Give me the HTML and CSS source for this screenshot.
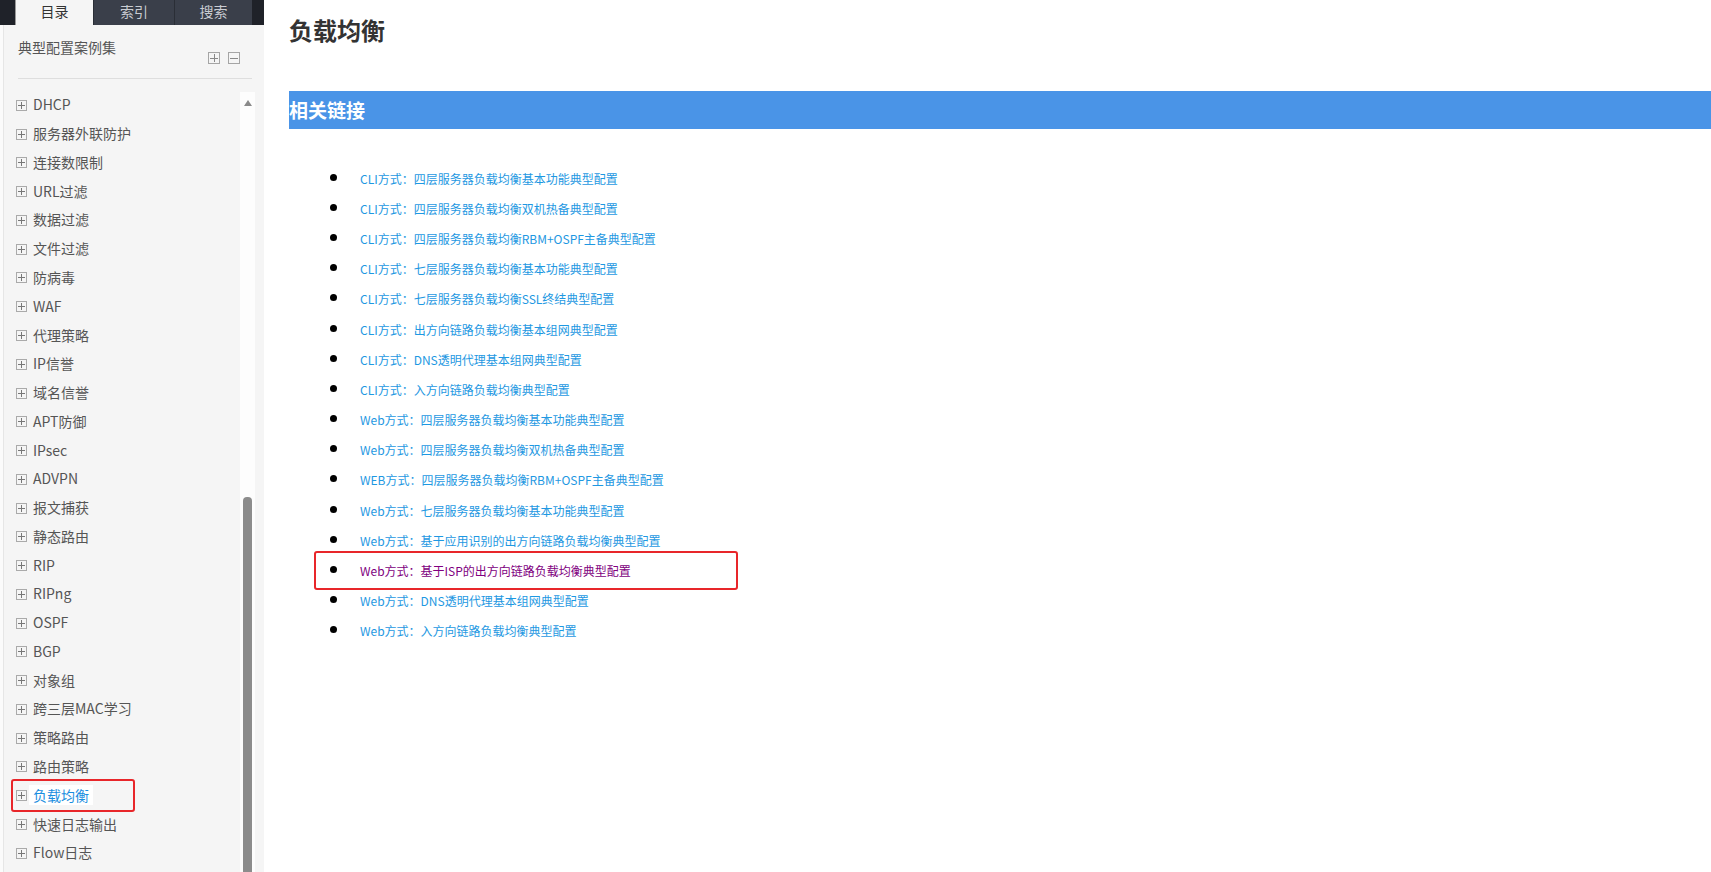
FILE: index.html
```html
<!DOCTYPE html>
<html lang="zh-CN">
<head>
    <meta charset="UTF-8">
    <meta name="viewport" content="width=device-width, initial-scale=1.0">
    <title>负载均衡</title>
    <link rel="stylesheet" href="styles.css">
</head>
<body>
    <div class="sidebar">
        <div class="tabs">
            <div class="tab active">目录</div>
            <div class="tab">索引</div>
            <div class="tab">搜索</div>
        </div>

        <div class="toc-head">
            <span class="toc-title">典型配置案例集</span>
            <span class="toc-tools"><i class="tool plus"></i><i class="tool minus"></i></span>
        </div>

        <div class="tree-wrap">
            <ul class="tree">
                <li><i class="node"></i><span class="label">DHCP</span></li>
                <li><i class="node"></i><span class="label">服务器外联防护</span></li>
                <li><i class="node"></i><span class="label">连接数限制</span></li>
                <li><i class="node"></i><span class="label">URL过滤</span></li>
                <li><i class="node"></i><span class="label">数据过滤</span></li>
                <li><i class="node"></i><span class="label">文件过滤</span></li>
                <li><i class="node"></i><span class="label">防病毒</span></li>
                <li><i class="node"></i><span class="label">WAF</span></li>
                <li><i class="node"></i><span class="label">代理策略</span></li>
                <li><i class="node"></i><span class="label">IP信誉</span></li>
                <li><i class="node"></i><span class="label">域名信誉</span></li>
                <li><i class="node"></i><span class="label">APT防御</span></li>
                <li><i class="node"></i><span class="label">IPsec</span></li>
                <li><i class="node"></i><span class="label">ADVPN</span></li>
                <li><i class="node"></i><span class="label">报文捕获</span></li>
                <li><i class="node"></i><span class="label">静态路由</span></li>
                <li><i class="node"></i><span class="label">RIP</span></li>
                <li><i class="node"></i><span class="label">RIPng</span></li>
                <li><i class="node"></i><span class="label">OSPF</span></li>
                <li><i class="node"></i><span class="label">BGP</span></li>
                <li><i class="node"></i><span class="label">对象组</span></li>
                <li><i class="node"></i><span class="label">跨三层MAC学习</span></li>
                <li><i class="node"></i><span class="label">策略路由</span></li>
                <li><i class="node"></i><span class="label">路由策略</span></li>
                <li class="selected"><i class="node"></i><span class="label">负载均衡</span><span class="mark side-mark"></span></li>
                <li><i class="node"></i><span class="label">快速日志输出</span></li>
                <li><i class="node"></i><span class="label">Flow日志</span></li>
            </ul>
            <div class="scrollbar">
                <span class="arrow-up"></span>
                <span class="track-space"></span>
                <span class="thumb"></span>
            </div>
        </div>
    </div>

    <div class="content">
        <h1 class="page-title">负载均衡</h1>
        <h2 class="section-bar">相关链接</h2>

        <ul class="links">
            <li><a href="#">CLI方式：四层服务器负载均衡基本功能典型配置</a></li>
            <li><a href="#">CLI方式：四层服务器负载均衡双机热备典型配置</a></li>
            <li><a href="#">CLI方式：四层服务器负载均衡RBM+OSPF主备典型配置</a></li>
            <li><a href="#">CLI方式：七层服务器负载均衡基本功能典型配置</a></li>
            <li><a href="#">CLI方式：七层服务器负载均衡SSL终结典型配置</a></li>
            <li><a href="#">CLI方式：出方向链路负载均衡基本组网典型配置</a></li>
            <li><a href="#">CLI方式：DNS透明代理基本组网典型配置</a></li>
            <li><a href="#">CLI方式：入方向链路负载均衡典型配置</a></li>
            <li><a href="#">Web方式：四层服务器负载均衡基本功能典型配置</a></li>
            <li><a href="#">Web方式：四层服务器负载均衡双机热备典型配置</a></li>
            <li><a href="#">WEB方式：四层服务器负载均衡RBM+OSPF主备典型配置</a></li>
            <li><a href="#">Web方式：七层服务器负载均衡基本功能典型配置</a></li>
            <li><a href="#">Web方式：基于应用识别的出方向链路负载均衡典型配置</a></li>
            <li class="marked"><a href="#" class="visited">Web方式：基于ISP的出方向链路负载均衡典型配置</a><span class="mark link-mark"></span></li>
            <li><a href="#">Web方式：DNS透明代理基本组网典型配置</a></li>
            <li><a href="#">Web方式：入方向链路负载均衡典型配置</a></li>
        </ul>
    </div>
</body>
</html>
```

FILE: styles.css
```css
html, body { height: 100%; }
body {
    margin: 0;
    display: flex;
    overflow: hidden;
    background: #fff;
    font-family: "Noto Sans CJK SC", "Microsoft YaHei", sans-serif;
}
ul { list-style: none; margin: 0; padding: 0; }

/* ---- left side: toc ---- */
.sidebar {
    width: 264px;
    flex: none;
    display: flex;
    flex-direction: column;
    background: #f5f5f5;
    box-shadow: inset 3px 0 #fbfbfb, inset 4px 0 #e6e6e6;
}
.tabs {
    height: 25px;
    display: flex;
    padding-left: 15px;
    background: #1f2229;
}
.tab {
    width: 80px;
    height: 25px;
    line-height: 23px;
    text-align: center;
    font-size: 14px;
    color: #c9ccd2;
    background: #3a3f4a;
    border-left: 1px solid #2a2e36;
}
.tab.active { width: 77px; color: #333; background: #f5f5f5; border-left-color: #999; }
.tab:last-child { width: 77px; }

.toc-head {
    display: flex;
    justify-content: space-between;
    margin: 0 12px 0 18px;
    padding: 12px 0 14px;
    border-bottom: 1px solid #dedede;
}
.toc-title { font-size: 14px; line-height: 20px; color: #555; }
.toc-tools { display: flex; gap: 8px; margin: 15px 12px 0 0; }
.tool {
    width: 10px;
    height: 10px;
    border: 1px solid #a5a5a5;
    background: linear-gradient(#888, #888) center / 8px 1px no-repeat;
}
.tool.plus {
    background:
        linear-gradient(#888, #888) center / 8px 1px no-repeat,
        linear-gradient(#888, #888) center / 1px 8px no-repeat;
}

.tree-wrap { flex: 1; display: flex; margin-top: 11px; min-height: 0; }
.tree { flex: 1; }
.tree li {
    height: 28.77px;
    display: flex;
    align-items: center;
    padding-left: 16px;
    font-size: 14px;
    color: #555;
}
.tree .node {
    width: 9px;
    height: 9px;
    margin: 2px 2px 0 0;
    border: 1px solid #aaa;
    background:
        linear-gradient(#777, #777) center / 7px 1px no-repeat,
        linear-gradient(#777, #777) center / 1px 7px no-repeat;
}
.tree .label { padding: 0 4px; line-height: 20px; }
.tree .selected { position: relative; }
.tree .selected .label { background: #fff; color: #1a8ee0; }

.scrollbar {
    width: 15px;
    margin: 2px 9px 0 0;
    display: flex;
    flex-direction: column;
    align-items: center;
    background: #fdfdfd;
}
.arrow-up {
    margin-top: 8px;
    border-left: 4.5px solid transparent;
    border-right: 4.5px solid transparent;
    border-bottom: 6px solid #8a8a8a;
}
.track-space { flex: 1; }
.thumb {
    width: 9px;
    height: 375px;
    border-radius: 4px 4px 0 0;
    background: #8c8c8c;
}

/* red annotation boxes */
.mark {
    position: absolute;
    border: 2px solid #e8262a;
    border-radius: 3px;
    box-sizing: border-box;
}
.side-mark { left: 11px; top: -1px; width: 124px; height: 33px; }

/* ---- right side: page ---- */
.content { flex: 1; padding-left: 25px; }
.page-title {
    margin: 14px 0 0;
    font-size: 24px;
    line-height: 32px;
    font-weight: bold;
    color: #333;
}
.section-bar {
    margin: 45px 0 0;
    height: 38px;
    line-height: 38px;
    font-size: 19px;
    font-weight: bold;
    color: #fff;
    background: #4a94e7;
}
.links { margin-top: 34px; padding-left: 41px; }
.links li {
    height: 30.19px;
    display: flex;
    align-items: center;
    font-size: 12px;
}
.links li::before {
    content: "";
    width: 7px;
    height: 7px;
    margin: -2px 23px 0 0;
    border-radius: 50%;
    background: #000;
}
.links a { color: #1e98e2; text-decoration: none; }
.links a.visited { color: #800080; }
.links .marked { position: relative; }
.link-mark { left: -16px; top: -4.5px; width: 424px; height: 39px; }
```
